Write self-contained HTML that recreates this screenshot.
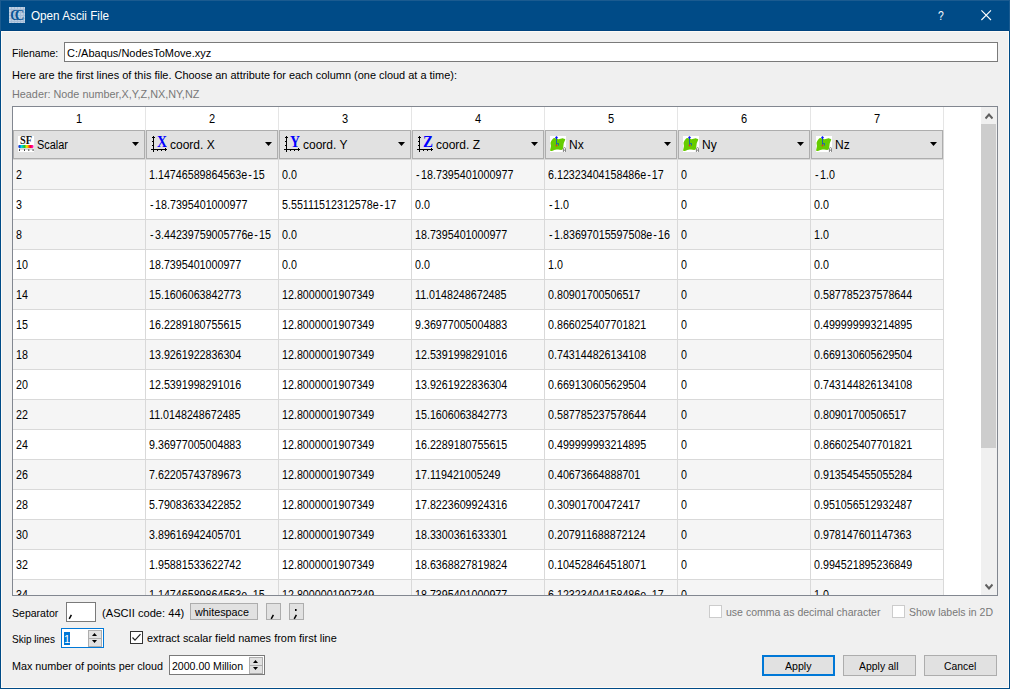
<!DOCTYPE html>
<html><head><meta charset="utf-8"><title>Open Ascii File</title>
<style>
html,body{margin:0;padding:0}
body{width:1010px;height:689px;overflow:hidden;position:relative;background:#f0f0f0;font-family:"Liberation Sans",sans-serif;font-size:11px;color:#000}
div,span,svg{position:absolute;box-sizing:border-box}
.t{white-space:nowrap;line-height:16px;height:16px;transform-origin:0 50%}
.g{color:#787878}
#tb{left:0;top:0;width:1010px;height:31px;background:#004b87}
#frame{left:12px;top:106px;width:986px;height:490px;border:1px solid #828790;background:#fff;overflow:hidden}
.alt{left:0;width:931px;height:29px;background:#f5f5f5}
.hl{left:0;width:931px;height:1px;background:#d9d9d9}
.vl{top:0;width:1px;height:488px;background:#d9d9d9}
.hn{top:4px;width:132px;text-align:center;font-size:12px;line-height:16px;height:16px;transform:scaleX(.92)}
.cb{top:23px;width:132px;height:29px;background:#e1e1e1;border:1px solid #adadad}
.cb .t{top:6px;font-size:12px}
.cb svg.ic{left:4px;top:5px;width:16px;height:16px}
.ar{left:118px;top:11px;width:7px;height:4px}
.c{font-size:12px;white-space:nowrap;line-height:16px;height:16px;transform-origin:0 50%;transform:scaleX(0.892)}
i{font-style:normal;letter-spacing:1.15px}
u{text-decoration:none;letter-spacing:1.8px;margin-left:1px}
.btn{background:#e1e1e1;border:1px solid #adadad}
.inp{background:#fff;border:1px solid #7a7a7a}
.sb{background:#e1e1e1;border:1px solid #adadad;width:14px;height:9px}
</style></head>
<body>
<div id="tb"></div>
<div style="left:0;top:0;width:1010px;height:1px;background:#1b5b90"></div>
<div style="left:0;top:0;width:1px;height:31px;background:#1b5b90"></div>
<div style="left:1009px;top:0;width:1px;height:31px;background:#1b5b90"></div>
<div style="left:1px;top:30px;width:1008px;height:1px;background:#00437f"></div>
<div style="left:0;top:31px;width:1px;height:658px;background:#004b87"></div>
<div style="left:1009px;top:31px;width:1px;height:658px;background:#004b87"></div>
<div style="left:0;top:688px;width:1010px;height:1px;background:#004b87"></div>
<div style="left:1px;top:31px;width:1008px;height:657px;border:1px solid #fdfaf6"></div>
<svg style="left:9px;top:7px;width:16px;height:16px" viewBox="0 0 16 16"><rect width="16" height="16" fill="#bccfe3"/><path d="M0 2.5H16M0 5.5H16M0 8.5H16M0 11.5H16M0 14.5H16M2.5 0V16M5.5 0V16M8.5 0V16M11.5 0V16M14.5 0V16" stroke="#a6bdd7" stroke-width="1" fill="none"/><text x="1.3" y="13" font-family="Liberation Serif" font-weight="bold" font-size="14.5" fill="#0a5596" textLength="9" lengthAdjust="spacingAndGlyphs">C</text><text x="5.8" y="13" font-family="Liberation Serif" font-weight="bold" font-size="14.5" fill="#0a5596" textLength="9.6" lengthAdjust="spacingAndGlyphs">C</text></svg>
<span class="t" id="ttl" style="left:31px;top:8px;font-size:12px;color:#fff;transform:scaleX(.975)">Open Ascii File</span>
<span class="t" id="q" style="left:938px;top:8px;font-size:13px;color:#fff;transform:scaleX(.8)">?</span>
<svg style="left:981px;top:10px;width:11px;height:11px" viewBox="0 0 11 11"><path d="M0.4 0.4L10 10M10 0.4L0.4 10" stroke="#fff" stroke-width="1.1" fill="none"/></svg>
<span class="t" id="lfn" style="left:12px;top:45px;transform:scaleX(.957)">Filename:</span>
<div class="inp" style="left:64px;top:42px;width:934px;height:20px"></div>
<span class="t" id="fn" style="left:67px;top:45px">C:/Abaqus/NodesToMove.xyz</span>
<span class="t" id="here" style="left:11.5px;top:67px;transform:scaleX(.9955)">Here are the first lines of this file. Choose an attribute for each column (one cloud at a time):</span>
<span class="t g" id="hdr" style="left:11.5px;top:86px;transform:scaleX(.984)">Header: Node number,X,Y,Z,NX,NY,NZ</span>
<div id="frame">
<div class="alt" style="top:53px"></div>
<div class="alt" style="top:113px"></div>
<div class="alt" style="top:173px"></div>
<div class="alt" style="top:233px"></div>
<div class="alt" style="top:293px"></div>
<div class="alt" style="top:353px"></div>
<div class="alt" style="top:413px"></div>
<div class="alt" style="top:473px"></div>
<div class="hl" style="top:52px"></div>
<div class="hl" style="top:82px"></div>
<div class="hl" style="top:112px"></div>
<div class="hl" style="top:142px"></div>
<div class="hl" style="top:172px"></div>
<div class="hl" style="top:202px"></div>
<div class="hl" style="top:232px"></div>
<div class="hl" style="top:262px"></div>
<div class="hl" style="top:292px"></div>
<div class="hl" style="top:322px"></div>
<div class="hl" style="top:352px"></div>
<div class="hl" style="top:382px"></div>
<div class="hl" style="top:412px"></div>
<div class="hl" style="top:442px"></div>
<div class="hl" style="top:472px"></div>
<div class="vl" style="left:132px"></div>
<div class="vl" style="left:265px"></div>
<div class="vl" style="left:398px"></div>
<div class="vl" style="left:531px"></div>
<div class="vl" style="left:664px"></div>
<div class="vl" style="left:797px"></div>
<div class="vl" style="left:930px"></div>
<div style="left:132px;top:0;width:1px;height:23px;background:#e5e5e5"></div>
<div style="left:265px;top:0;width:1px;height:23px;background:#e5e5e5"></div>
<div style="left:398px;top:0;width:1px;height:23px;background:#e5e5e5"></div>
<div style="left:531px;top:0;width:1px;height:23px;background:#e5e5e5"></div>
<div style="left:664px;top:0;width:1px;height:23px;background:#e5e5e5"></div>
<div style="left:797px;top:0;width:1px;height:23px;background:#e5e5e5"></div>
<div style="left:930px;top:0;width:1px;height:23px;background:#e5e5e5"></div>
<span class="hn" style="left:0px">1</span>
<span class="hn" style="left:133px">2</span>
<span class="hn" style="left:266px">3</span>
<span class="hn" style="left:399px">4</span>
<span class="hn" style="left:532px">5</span>
<span class="hn" style="left:665px">6</span>
<span class="hn" style="left:798px">7</span>
<div class="cb" style="left:0px"><svg class="ic" viewBox="0 0 16 16"><rect width="16" height="16" fill="#fff"/><defs><linearGradient id="rb" x1="0" x2="1" y1="0" y2="0"><stop offset="0" stop-color="#5030c0"/><stop offset=".08" stop-color="#0050e0"/><stop offset=".2" stop-color="#00d8f0"/><stop offset=".4" stop-color="#20c030"/><stop offset=".55" stop-color="#f0f000"/><stop offset=".66" stop-color="#ff8000"/><stop offset=".77" stop-color="#ff0020"/><stop offset=".9" stop-color="#ff00a0"/><stop offset="1" stop-color="#ff70c8"/></linearGradient></defs><text x="2.1" y="7.8" font-family="Liberation Serif" font-weight="bold" font-size="11.5" fill="#111" textLength="12" lengthAdjust="spacingAndGlyphs">SF</text><rect x=".3" y="9" width="15.4" height="3" rx="1" fill="url(#rb)"/><path d="M1 13H15.6" stroke="#999" stroke-width=".7"/><path d="M1.5 13.2V15M6.5 13.2V15M10.8 13.2V15M15.1 13.2V15" stroke="#444" stroke-width="1"/></svg><span class="t" id="cb0" style="left:23px;transform:scaleX(0.91)">Scalar</span><svg class="ar" viewBox="0 0 7 4"><path d="M0 0H7L3.5 4Z" fill="#000"/></svg></div>
<div class="cb" style="left:133px"><svg class="ic" viewBox="0 0 16 16"><path shape-rendering="crispEdges" fill="#000" d="M2 0h1v16h-1zM1 1h3v1h-3zM1 5h1v1h-1zM1 9h1v1h-1zM0 13h16v1h-16zM14 12h1v3h-1zM6 14h1v1h-1zM10 14h1v1h-1z"/><text x="6" y="11" font-family="Liberation Serif" font-weight="bold" font-size="16.5" fill="#0000ff" textLength="10" lengthAdjust="spacingAndGlyphs">X</text></svg><span class="t" id="cb1" style="left:23px;transform:scaleX(1)">coord. X</span><svg class="ar" viewBox="0 0 7 4"><path d="M0 0H7L3.5 4Z" fill="#000"/></svg></div>
<div class="cb" style="left:266px"><svg class="ic" viewBox="0 0 16 16"><path shape-rendering="crispEdges" fill="#000" d="M2 0h1v16h-1zM1 1h3v1h-3zM1 5h1v1h-1zM1 9h1v1h-1zM0 13h16v1h-16zM14 12h1v3h-1zM6 14h1v1h-1zM10 14h1v1h-1z"/><text x="6" y="11" font-family="Liberation Serif" font-weight="bold" font-size="16.5" fill="#0000ff" textLength="10" lengthAdjust="spacingAndGlyphs">Y</text></svg><span class="t" id="cb2" style="left:23px;transform:scaleX(1)">coord. Y</span><svg class="ar" viewBox="0 0 7 4"><path d="M0 0H7L3.5 4Z" fill="#000"/></svg></div>
<div class="cb" style="left:399px"><svg class="ic" viewBox="0 0 16 16"><path shape-rendering="crispEdges" fill="#000" d="M2 0h1v16h-1zM1 1h3v1h-3zM1 5h1v1h-1zM1 9h1v1h-1zM0 13h16v1h-16zM14 12h1v3h-1zM6 14h1v1h-1zM10 14h1v1h-1z"/><text x="6" y="11" font-family="Liberation Serif" font-weight="bold" font-size="16.5" fill="#0000ff" textLength="10" lengthAdjust="spacingAndGlyphs">Z</text></svg><span class="t" id="cb3" style="left:23px;transform:scaleX(1)">coord. Z</span><svg class="ar" viewBox="0 0 7 4"><path d="M0 0H7L3.5 4Z" fill="#000"/></svg></div>
<div class="cb" style="left:532px"><svg class="ic" viewBox="0 0 16 16"><rect width="16" height="16" fill="#fff"/><path d="M0.6 6.4C1.6 4.5 3 2.4 4 2.1C5.6 2 6.6 3 8.2 3.2C10 3.4 11.6 2 13.2 2.4C14.4 2.6 15.4 3 15.2 3.8C14.6 5.4 13.8 6.6 13.6 8.2C13.4 9.8 13.4 11.6 12.6 13.6C11.4 14.4 9.6 13.6 8 13.6C6 13.6 4.6 14 3.2 14.4C1.8 14.9 0.3 15.2 0.1 14.6C0.3 12.8 0.9 11.4 0.9 9.8C0.9 8.6 0.4 7.6 0.6 6.4Z" fill="#66cc00"/><path d="M6.5 1.5V9.5M6.5 7.5H8.5V9.5" stroke="#1f66a0" stroke-width="1" fill="none"/><path d="M6.5 0L8 1.6L6.5 3.2L5 1.6Z" fill="#0a18ff"/><circle cx="6.5" cy="9.6" r="1" fill="#e8361c"/><path d="M13.4 16V12.6C13.4 11.3 15.6 11.3 15.6 12.6V16M13.4 14.2H15.6" stroke="#777" stroke-width=".9" fill="none"/></svg><span class="t" id="cb4" style="left:23px;transform:scaleX(1)">Nx</span><svg class="ar" viewBox="0 0 7 4"><path d="M0 0H7L3.5 4Z" fill="#000"/></svg></div>
<div class="cb" style="left:665px"><svg class="ic" viewBox="0 0 16 16"><rect width="16" height="16" fill="#fff"/><path d="M0.6 6.4C1.6 4.5 3 2.4 4 2.1C5.6 2 6.6 3 8.2 3.2C10 3.4 11.6 2 13.2 2.4C14.4 2.6 15.4 3 15.2 3.8C14.6 5.4 13.8 6.6 13.6 8.2C13.4 9.8 13.4 11.6 12.6 13.6C11.4 14.4 9.6 13.6 8 13.6C6 13.6 4.6 14 3.2 14.4C1.8 14.9 0.3 15.2 0.1 14.6C0.3 12.8 0.9 11.4 0.9 9.8C0.9 8.6 0.4 7.6 0.6 6.4Z" fill="#66cc00"/><path d="M6.5 1.5V9.5M6.5 7.5H8.5V9.5" stroke="#1f66a0" stroke-width="1" fill="none"/><path d="M6.5 0L8 1.6L6.5 3.2L5 1.6Z" fill="#0a18ff"/><circle cx="6.5" cy="9.6" r="1" fill="#e8361c"/><path d="M13.4 16V12.6C13.4 11.3 15.6 11.3 15.6 12.6V16M13.4 14.2H15.6" stroke="#777" stroke-width=".9" fill="none"/></svg><span class="t" id="cb5" style="left:23px;transform:scaleX(1)">Ny</span><svg class="ar" viewBox="0 0 7 4"><path d="M0 0H7L3.5 4Z" fill="#000"/></svg></div>
<div class="cb" style="left:798px"><svg class="ic" viewBox="0 0 16 16"><rect width="16" height="16" fill="#fff"/><path d="M0.6 6.4C1.6 4.5 3 2.4 4 2.1C5.6 2 6.6 3 8.2 3.2C10 3.4 11.6 2 13.2 2.4C14.4 2.6 15.4 3 15.2 3.8C14.6 5.4 13.8 6.6 13.6 8.2C13.4 9.8 13.4 11.6 12.6 13.6C11.4 14.4 9.6 13.6 8 13.6C6 13.6 4.6 14 3.2 14.4C1.8 14.9 0.3 15.2 0.1 14.6C0.3 12.8 0.9 11.4 0.9 9.8C0.9 8.6 0.4 7.6 0.6 6.4Z" fill="#66cc00"/><path d="M6.5 1.5V9.5M6.5 7.5H8.5V9.5" stroke="#1f66a0" stroke-width="1" fill="none"/><path d="M6.5 0L8 1.6L6.5 3.2L5 1.6Z" fill="#0a18ff"/><circle cx="6.5" cy="9.6" r="1" fill="#e8361c"/><path d="M13.4 16V12.6C13.4 11.3 15.6 11.3 15.6 12.6V16M13.4 14.2H15.6" stroke="#777" stroke-width=".9" fill="none"/></svg><span class="t" id="cb6" style="left:23px;transform:scaleX(1)">Nz</span><svg class="ar" viewBox="0 0 7 4"><path d="M0 0H7L3.5 4Z" fill="#000"/></svg></div>
<span class="c" style="left:3px;top:60px">2</span>
<span class="c" style="left:136px;top:60px">1.14746589864563<i>e-</i>15</span>
<span class="c" style="left:269px;top:60px">0.0</span>
<span class="c" style="left:402px;top:60px"><u>-</u>18.7395401000977</span>
<span class="c" style="left:535px;top:60px">6.12323404158486<i>e-</i>17</span>
<span class="c" style="left:668px;top:60px">0</span>
<span class="c" style="left:801px;top:60px"><u>-</u>1.0</span>
<span class="c" style="left:3px;top:90px">3</span>
<span class="c" style="left:136px;top:90px"><u>-</u>18.7395401000977</span>
<span class="c" style="left:269px;top:90px">5.55111512312578<i>e-</i>17</span>
<span class="c" style="left:402px;top:90px">0.0</span>
<span class="c" style="left:535px;top:90px"><u>-</u>1.0</span>
<span class="c" style="left:668px;top:90px">0</span>
<span class="c" style="left:801px;top:90px">0.0</span>
<span class="c" style="left:3px;top:120px">8</span>
<span class="c" style="left:136px;top:120px"><u>-</u>3.44239759005776<i>e-</i>15</span>
<span class="c" style="left:269px;top:120px">0.0</span>
<span class="c" style="left:402px;top:120px">18.7395401000977</span>
<span class="c" style="left:535px;top:120px"><u>-</u>1.83697015597508<i>e-</i>16</span>
<span class="c" style="left:668px;top:120px">0</span>
<span class="c" style="left:801px;top:120px">1.0</span>
<span class="c" style="left:3px;top:150px">10</span>
<span class="c" style="left:136px;top:150px">18.7395401000977</span>
<span class="c" style="left:269px;top:150px">0.0</span>
<span class="c" style="left:402px;top:150px">0.0</span>
<span class="c" style="left:535px;top:150px">1.0</span>
<span class="c" style="left:668px;top:150px">0</span>
<span class="c" style="left:801px;top:150px">0.0</span>
<span class="c" style="left:3px;top:180px">14</span>
<span class="c" style="left:136px;top:180px">15.1606063842773</span>
<span class="c" style="left:269px;top:180px">12.8000001907349</span>
<span class="c" style="left:402px;top:180px">11.0148248672485</span>
<span class="c" style="left:535px;top:180px">0.80901700506517</span>
<span class="c" style="left:668px;top:180px">0</span>
<span class="c" style="left:801px;top:180px">0.587785237578644</span>
<span class="c" style="left:3px;top:210px">15</span>
<span class="c" style="left:136px;top:210px">16.2289180755615</span>
<span class="c" style="left:269px;top:210px">12.8000001907349</span>
<span class="c" style="left:402px;top:210px">9.36977005004883</span>
<span class="c" style="left:535px;top:210px">0.866025407701821</span>
<span class="c" style="left:668px;top:210px">0</span>
<span class="c" style="left:801px;top:210px">0.499999993214895</span>
<span class="c" style="left:3px;top:240px">18</span>
<span class="c" style="left:136px;top:240px">13.9261922836304</span>
<span class="c" style="left:269px;top:240px">12.8000001907349</span>
<span class="c" style="left:402px;top:240px">12.5391998291016</span>
<span class="c" style="left:535px;top:240px">0.743144826134108</span>
<span class="c" style="left:668px;top:240px">0</span>
<span class="c" style="left:801px;top:240px">0.669130605629504</span>
<span class="c" style="left:3px;top:270px">20</span>
<span class="c" style="left:136px;top:270px">12.5391998291016</span>
<span class="c" style="left:269px;top:270px">12.8000001907349</span>
<span class="c" style="left:402px;top:270px">13.9261922836304</span>
<span class="c" style="left:535px;top:270px">0.669130605629504</span>
<span class="c" style="left:668px;top:270px">0</span>
<span class="c" style="left:801px;top:270px">0.743144826134108</span>
<span class="c" style="left:3px;top:300px">22</span>
<span class="c" style="left:136px;top:300px">11.0148248672485</span>
<span class="c" style="left:269px;top:300px">12.8000001907349</span>
<span class="c" style="left:402px;top:300px">15.1606063842773</span>
<span class="c" style="left:535px;top:300px">0.587785237578644</span>
<span class="c" style="left:668px;top:300px">0</span>
<span class="c" style="left:801px;top:300px">0.80901700506517</span>
<span class="c" style="left:3px;top:330px">24</span>
<span class="c" style="left:136px;top:330px">9.36977005004883</span>
<span class="c" style="left:269px;top:330px">12.8000001907349</span>
<span class="c" style="left:402px;top:330px">16.2289180755615</span>
<span class="c" style="left:535px;top:330px">0.499999993214895</span>
<span class="c" style="left:668px;top:330px">0</span>
<span class="c" style="left:801px;top:330px">0.866025407701821</span>
<span class="c" style="left:3px;top:360px">26</span>
<span class="c" style="left:136px;top:360px">7.62205743789673</span>
<span class="c" style="left:269px;top:360px">12.8000001907349</span>
<span class="c" style="left:402px;top:360px">17.119421005249</span>
<span class="c" style="left:535px;top:360px">0.40673664888701</span>
<span class="c" style="left:668px;top:360px">0</span>
<span class="c" style="left:801px;top:360px">0.913545455055284</span>
<span class="c" style="left:3px;top:390px">28</span>
<span class="c" style="left:136px;top:390px">5.79083633422852</span>
<span class="c" style="left:269px;top:390px">12.8000001907349</span>
<span class="c" style="left:402px;top:390px">17.8223609924316</span>
<span class="c" style="left:535px;top:390px">0.30901700472417</span>
<span class="c" style="left:668px;top:390px">0</span>
<span class="c" style="left:801px;top:390px">0.951056512932487</span>
<span class="c" style="left:3px;top:420px">30</span>
<span class="c" style="left:136px;top:420px">3.89616942405701</span>
<span class="c" style="left:269px;top:420px">12.8000001907349</span>
<span class="c" style="left:402px;top:420px">18.3300361633301</span>
<span class="c" style="left:535px;top:420px">0.207911688872124</span>
<span class="c" style="left:668px;top:420px">0</span>
<span class="c" style="left:801px;top:420px">0.978147601147363</span>
<span class="c" style="left:3px;top:450px">32</span>
<span class="c" style="left:136px;top:450px">1.95881533622742</span>
<span class="c" style="left:269px;top:450px">12.8000001907349</span>
<span class="c" style="left:402px;top:450px">18.6368827819824</span>
<span class="c" style="left:535px;top:450px">0.104528464518071</span>
<span class="c" style="left:668px;top:450px">0</span>
<span class="c" style="left:801px;top:450px">0.994521895236849</span>
<span class="c" style="left:3px;top:480px">34</span>
<span class="c" style="left:136px;top:480px">1.14746589864563<i>e-</i>15</span>
<span class="c" style="left:269px;top:480px">12.8000001907349</span>
<span class="c" style="left:402px;top:480px">18.7395401000977</span>
<span class="c" style="left:535px;top:480px">6.12323404158486<i>e-</i>17</span>
<span class="c" style="left:668px;top:480px">0</span>
<span class="c" style="left:801px;top:480px">1.0</span>
<div style="left:968px;top:0;width:16px;height:488px;background:#f0f0f0"></div>
<div style="left:968px;top:17px;width:15px;height:324px;background:#cdcdcd"></div>
<svg style="left:972px;top:6px;width:8px;height:7px" viewBox="0 0 8 7"><path d="M0.5 5.5L4 1.5L7.5 5.5" stroke="#606060" stroke-width="2" fill="none"/></svg>
<svg style="left:972px;top:476px;width:8px;height:7px" viewBox="0 0 8 7"><path d="M0.5 1.5L4 5.5L7.5 1.5" stroke="#606060" stroke-width="2" fill="none"/></svg>
</div>
<span class="t" id="lsep" style="left:12px;top:605px;transform:scaleX(.958)">Separator</span>
<div class="inp" style="left:66px;top:602px;width:30px;height:20px"></div>
<svg style="left:68px;top:614px;width:5px;height:6px" viewBox="0 0 5 6"><path d="M3.4 0.8L1.2 4.9" stroke="#000" stroke-width="1.5" fill="none"/></svg>
<span class="t" id="ascii" style="left:102px;top:605px;transform:scaleX(1.0125)">(ASCII code: 44)</span>
<div class="btn" style="left:190px;top:603px;width:68px;height:17px"></div>
<span class="t" id="ws" style="left:195px;top:604px;transform:scaleX(.98)">whitespace</span>
<div class="btn" style="left:266px;top:603px;width:15px;height:17px"></div>
<svg style="left:270px;top:614px;width:5px;height:6px" viewBox="0 0 5 6"><path d="M3.4 0.8L1.2 4.9" stroke="#000" stroke-width="1.5" fill="none"/></svg>
<div class="btn" style="left:289px;top:603px;width:15px;height:17px"></div>
<svg style="left:293px;top:608px;width:5px;height:12px" viewBox="0 0 5 12"><path d="M3.4 6.8L1.2 10.9" stroke="#000" stroke-width="1.5" fill="none"/><rect x="2" y="1" width="1.6" height="2" fill="#000"/></svg>
<div style="left:709px;top:605px;width:13px;height:13px;background:#fff;border:1px solid #cccccc"></div>
<span class="t g" id="dc1" style="left:726px;top:604px;transform:scaleX(.957)">use comma as decimal character</span>
<div style="left:892px;top:605px;width:13px;height:13px;background:#fff;border:1px solid #cccccc"></div>
<span class="t g" id="dc2" style="left:909px;top:604px;transform:scaleX(.954)">Show labels in 2D</span>
<span class="t" id="lskip" style="left:12px;top:631px;transform:scaleX(.913)">Skip lines</span>
<div style="left:61px;top:628px;width:43px;height:20px;background:#fff;border:1px solid #0078d7"></div>
<div style="left:64px;top:632px;width:6px;height:13px;background:#0078d7"></div>
<span class="t" id="one" style="left:64px;top:631px;color:#fff">1</span>
<div class="sb" style="left:88px;top:630px"></div>
<div class="sb" style="left:88px;top:638px"></div>
<svg style="left:92px;top:633px;width:5px;height:3px" viewBox="0 0 5 3"><path d="M0 3H5L2.5 0Z" fill="#000"/></svg>
<svg style="left:92px;top:640px;width:5px;height:3px" viewBox="0 0 5 3"><path d="M0 0H5L2.5 3Z" fill="#000"/></svg>
<div style="left:130px;top:631px;width:13px;height:13px;background:#fff;border:1px solid #333"></div>
<svg style="left:130px;top:631px;width:13px;height:13px" viewBox="0 0 13 13"><path d="M2.5 6.5L5 9.2L10.5 3.2" stroke="#222" stroke-width="1.2" fill="none"/></svg>
<span class="t" id="ext" style="left:147px;top:630px;transform:scaleX(.995)">extract scalar field names from first line</span>
<span class="t" id="lmax" style="left:12px;top:658px;transform:scaleX(.98)">Max number of points per cloud</span>
<div class="inp" style="left:169px;top:655px;width:96px;height:20px"></div>
<span class="t" id="mil" style="left:172px;top:658px;transform:scaleX(.96)">2000.00 Million</span>
<div class="sb" style="left:249px;top:657px"></div>
<div class="sb" style="left:249px;top:665px"></div>
<svg style="left:253px;top:660px;width:5px;height:3px" viewBox="0 0 5 3"><path d="M0 3H5L2.5 0Z" fill="#000"/></svg>
<svg style="left:253px;top:667px;width:5px;height:3px" viewBox="0 0 5 3"><path d="M0 0H5L2.5 3Z" fill="#000"/></svg>
<div style="left:762px;top:655px;width:73px;height:21px;background:#e1e1e1;border:2px solid #0078d7"></div>
<span class="t" id="ap" style="left:785px;top:658px;transform:scaleX(.963)">Apply</span>
<div class="btn" style="left:843px;top:655px;width:73px;height:21px"></div>
<span class="t" id="apa" style="left:859px;top:658px;transform:scaleX(.95)">Apply all</span>
<div class="btn" style="left:924px;top:655px;width:73px;height:21px"></div>
<span class="t" id="can" style="left:944px;top:658px;transform:scaleX(.94)">Cancel</span>
</body></html>
